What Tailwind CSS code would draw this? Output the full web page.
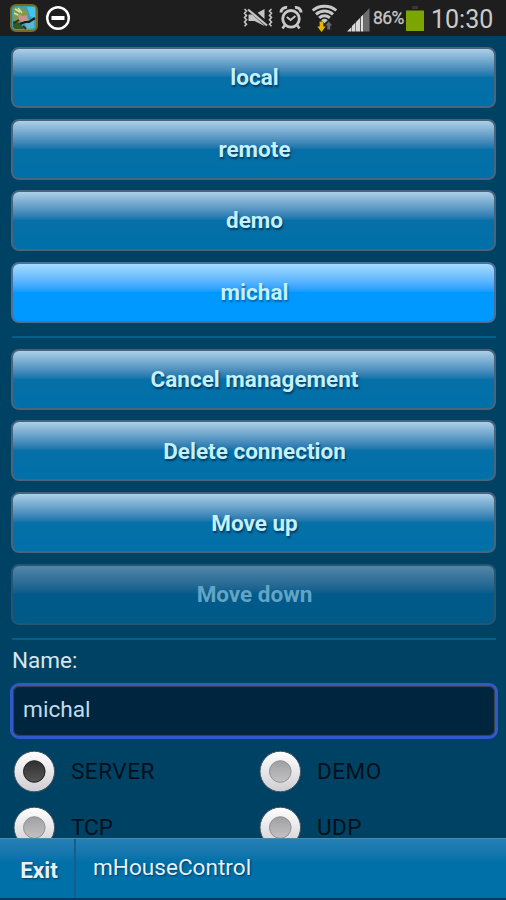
<!DOCTYPE html>
<html lang="en">
<head>
  <meta charset="UTF-8">
  <meta name="viewport" content="width=device-width, initial-scale=1.0">
  <title>mHouseControl</title>
  <script src="https://cdn.jsdelivr.net/npm/@tailwindcss/browser@4"></script>
</head>
<body class="flex flex-col h-[900px] w-[506px] overflow-hidden bg-[#004263] font-['Roboto',sans-serif]">

  <!-- Status bar -->
  <header class="flex items-center h-9 shrink-0 bg-[#1e1e1e] pl-[10px] pr-[13px]">
    <svg class="w-[28px] h-[28px]" viewBox="0 0 28 28">
      <rect x="1" y="1" width="26" height="26" rx="5" fill="#3a9fb8" stroke="#7a6a20" stroke-width="2"/>
      <path d="M3 4h10l5 4-3 8-7 3-5-4z" fill="#7f9a4a"/>
      <path d="M17 3h8v12l-5-3z" fill="#42c4ef"/>
      <path d="M15 20l9-4v8l-7 1z" fill="#58b8d0"/>
      <path d="M3 17l7 2 4 6H5l-2-2z" fill="#2e5a2a"/>
      <path d="M8 10l5 2 4-1 1 5-4 3-5-3z" fill="#c9928a"/>
      <path d="M5 5l5 3M8 4l4 5M4 9l4 2" stroke="#cfe5b0" stroke-width="1.500"/>
      <path d="M10 20l5-2 4 0 6-4" stroke="#1c1c1c" stroke-width="2.200" fill="none"/>
      <path d="M4 19l5-3M13 22l3 3" stroke="#3a2a18" stroke-width="2"/>
    </svg>
    <svg class="w-[26px] h-[26px] ml-[7px]" viewBox="0 0 26 26">
      <circle cx="13" cy="13" r="10.800" fill="none" stroke="#fff" stroke-width="2.400"/>
      <rect x="6.500" y="11" width="13" height="4" fill="#fff"/>
    </svg>

    <!-- Vibrate / muted -->
    <svg class="w-[30px] h-[22px] ml-auto" viewBox="0 0 30 22" fill="none" stroke="#c4c4c4">
      <path d="M1.500 2l2 2-2 2.200 2 2.200-2 2.200 2 2.200-2 2.200 2 2.200-2 2M28.500 2l-2 2 2 2.200-2 2.200 2 2.200-2 2.200 2 2.200-2 2.200 2 2" stroke-width="1.600"/>
      <path d="M5.500 7.500h6l10-5.500v17l-10-5h-6z" fill="#c4c4c4" stroke="none"/>
      <path d="M6 1.500l18 16" stroke="#1e1e1e" stroke-width="5"/>
      <path d="M5 2.500l19 16" stroke-width="2.200"/>
    </svg>
    <!-- Alarm -->
    <svg class="w-[24px] h-[26px] ml-[6px]" viewBox="0 0 24 26" fill="none" stroke="#c8c8c8">
      <circle cx="12" cy="13.800" r="8.300" stroke-width="2.800"/>
      <path d="M2 7.500a5 5 0 0 1 6-5M22 7.500a5 5 0 0 0-6-5" stroke-width="3"/>
      <path d="M7.800 12l3.800 3 4.800-4" stroke-width="2"/>
      <path d="M6 20l-2.500 3.500M18 20l2.500 3.500" stroke-width="2.500"/>
    </svg>
    <!-- Wifi -->
    <svg class="w-[25px] h-[28px] ml-[9px]" viewBox="0 0 25 28" fill="none" stroke="#c8c8c8" stroke-width="2.900">
      <path d="M.8 6.500C7 .8 18 .8 24.200 6.500M4 10.300c5-4.500 12-4.500 17 0M7.200 13.900c3-2.800 7.600-2.800 10.600 0"/>
      <path d="M9.200 16.300a5 5 0 0 1 6.600 0l-3.300 3z" fill="#c8c8c8" stroke="none"/>
      <path d="M7.600 17.500h3.800v5h2.300L9.500 28l-4.200-5.500h2.300z" fill="#e5b800" stroke="none"/>
      <path d="M15.200 25.500v-4h-2l3.500-4 3.500 4h-2v4z" fill="#6a6a6a" stroke="none"/>
    </svg>
    <!-- Signal -->
    <svg class="w-[24px] h-[24px] ml-[9px] mt-[3px]" viewBox="0 0 24 24">
      <path d="M1 23.500L5.500 19v4.500z" fill="#d8d8d8"/>
      <path d="M6 23.500V18l3.500-3.500v9z" fill="#d8d8d8"/>
      <path d="M10 23.500V14l4-4v13.500z" fill="#d8d8d8"/>
      <path d="M14.700 23.500V9l2.600-2.600v17.100z" fill="#e4e4e4"/>
      <path d="M17.300 23.500V6.400L23.500 0v23.500z" fill="#6e6e6e"/>
    </svg>
    <span class="w-[31px] ml-[3px] mt-[2px] text-[17.500px] leading-none tracking-[-0.550px] text-[#c6c6c6] whitespace-nowrap [-webkit-text-stroke:0.3px_#c6c6c6]">86%</span>
    <svg class="w-[18px] h-[26px] ml-[2px]" viewBox="0 0 18 26">
      <rect x="6" y="1" width="6" height="3" fill="#383838"/>
      <rect x="0" y="5.500" width="18" height="20.500" fill="#7ba500"/>
    </svg>
    <span class="w-[62px] ml-[7px] mt-[2px] text-[25px] leading-none text-[#cbcbcb] whitespace-nowrap">10:30</span>
  </header>

  <main class="flex-1 min-h-0 overflow-hidden pt-[11px] pl-[11px] pr-[10px]">
    <!-- Connections -->
    <div class="flex flex-col gap-[10.600px] text-[22.500px] font-bold text-[#c4f0ff]">
      <button class="h-[61px] pl-[2px] pt-px rounded-[8px] border-2 border-[#4a647c] bg-linear-to-b from-[#acd0e8] via-[#0670a8] via-50% to-[#0070a8] [text-shadow:1px_2px_2px_#003a60]">local</button>
      <button class="h-[61px] pl-[2px] pt-px rounded-[8px] border-2 border-[#4a647c] bg-linear-to-b from-[#acd0e8] via-[#0670a8] via-50% to-[#0070a8] [text-shadow:1px_2px_2px_#003a60]">remote</button>
      <button class="h-[61px] pl-[2px] pt-px rounded-[8px] border-2 border-[#4a647c] bg-linear-to-b from-[#acd0e8] via-[#0670a8] via-50% to-[#0070a8] [text-shadow:1px_2px_2px_#003a60]">demo</button>
      <button class="h-[61px] pl-[2px] pt-px rounded-[8px] border-2 border-[#4d6f98] bg-linear-to-b from-[#a5dcff] via-[#0099ff] via-50% to-[#0099ff] [text-shadow:1px_2px_2px_#0064a8]">michal</button>
    </div>

    <hr class="mt-[13px] mb-[11px] ml-px border-0 h-[2px] bg-[#00608a]">

    <!-- Management -->
    <div class="flex flex-col gap-[10.600px] text-[22.500px] font-bold text-[#c4f0ff]">
      <button class="h-[61px] pl-[2px] pt-[2px] rounded-[8px] border-2 border-[#4a647c] bg-linear-to-b from-[#acd0e8] via-[#0670a8] via-50% to-[#0070a8] [text-shadow:1px_2px_2px_#003a60]">Cancel management</button>
      <button class="h-[61px] pl-[2px] pt-[2px] rounded-[8px] border-2 border-[#4a647c] bg-linear-to-b from-[#acd0e8] via-[#0670a8] via-50% to-[#0070a8] [text-shadow:1px_2px_2px_#003a60]">Delete connection</button>
      <button class="h-[61px] pl-[2px] pt-[2px] rounded-[8px] border-2 border-[#4a647c] bg-linear-to-b from-[#acd0e8] via-[#0670a8] via-50% to-[#0070a8] [text-shadow:1px_2px_2px_#003a60]">Move up</button>
      <button class="h-[61px] pl-[2px] pt-[2px] rounded-[8px] border-2 border-[#275572] bg-linear-to-b from-[#5286a8] via-[#005a8a] via-50% to-[#005a88] text-[#64a4c4]" disabled>Move down</button>
    </div>

    <hr class="mt-[13px] ml-px border-0 h-[2px] bg-[#00608a]">

    <!-- Edit form -->
    <label for="name" class="block mt-[6px] pl-px h-[29px] leading-[28px] text-[22.500px] text-[#d8e4ee]">Name:</label>
    <input id="name" type="text" value="michal" class="block w-[488px] h-[56px] -ml-px mt-[8px] pl-[10px] pb-[2px] rounded-[9px] border-3 border-[#3359c8] bg-[#00263f] text-[22.700px] text-[#c2dcec] outline-none shadow-[inset_0_0_1px_1px_#3d4650]">

    <div class="grid grid-cols-[246px_1fr] auto-rows-[56px] mt-[4px] ml-[2px] text-[22.500px] text-[#00111c]">
      <label class="flex items-center gap-[15px]">
        <svg class="w-[43px] h-[44px]" viewBox="0 0 43 44">
          <defs>
            <linearGradient id="ring" x2="0" y2="1"><stop stop-color="#fff"/><stop offset="1" stop-color="#cfcdd2"/></linearGradient>
            <linearGradient id="off" x2="0" y2="1"><stop stop-color="#a09fa2"/><stop offset="1" stop-color="#c2c1c4"/></linearGradient>
            <linearGradient id="on" x2="0" y2="1"><stop stop-color="#303030"/><stop offset="1" stop-color="#555"/></linearGradient>
          </defs>
          <circle cx="21.300" cy="22.500" r="20.300" fill="url(#ring)" stroke="#3a5262"/>
          <circle cx="21.300" cy="22.500" r="10.800" fill="url(#on)" stroke="#222"/>
        </svg>
        <span class="pt-[2px] tracking-[0.500px]">SERVER</span>
      </label>
      <label class="flex items-center gap-[15px]">
        <svg class="w-[43px] h-[44px]" viewBox="0 0 43 44">
          <circle cx="21.300" cy="22.500" r="20.300" fill="url(#ring)" stroke="#3a5262"/>
          <circle cx="21.300" cy="22.500" r="10.800" fill="url(#off)" stroke="#929195"/>
        </svg>
        <span class="pt-[2px] tracking-[0.500px]">DEMO</span>
      </label>
      <label class="flex items-center gap-[15px]">
        <svg class="w-[43px] h-[44px]" viewBox="0 0 43 44">
          <circle cx="21.300" cy="22.500" r="20.300" fill="url(#ring)" stroke="#3a5262"/>
          <circle cx="21.300" cy="22.500" r="10.800" fill="url(#off)" stroke="#929195"/>
        </svg>
        <span class="pt-[2px]">TCP</span>
      </label>
      <label class="flex items-center gap-[15px]">
        <svg class="w-[43px] h-[44px]" viewBox="0 0 43 44">
          <circle cx="21.300" cy="22.500" r="20.300" fill="url(#ring)" stroke="#3a5262"/>
          <circle cx="21.300" cy="22.500" r="10.800" fill="url(#off)" stroke="#929195"/>
        </svg>
        <span class="pt-[2px] tracking-[0.500px]">UDP</span>
      </label>
    </div>
  </main>

  <!-- Toolbar -->
  <footer class="flex h-[62px] shrink-0 border-t border-t-[#4a8cae] border-b-2 border-b-[#003a5c] bg-linear-to-b from-[#2580b4] via-[#0070a8] via-40% to-[#0070a8] text-[#e6f0fa]">
    <button class="w-[76px] pl-[4px] pt-[4px] border-r-2 border-r-[#155f8c] text-[22.500px] font-bold [text-shadow:1px_1px_2px_#003a60]">Exit</button>
    <span class="pl-[17px] leading-[57px] text-[22.600px] [text-shadow:1px_1px_2px_#003a60]">mHouseControl</span>
  </footer>

</body>
</html>
